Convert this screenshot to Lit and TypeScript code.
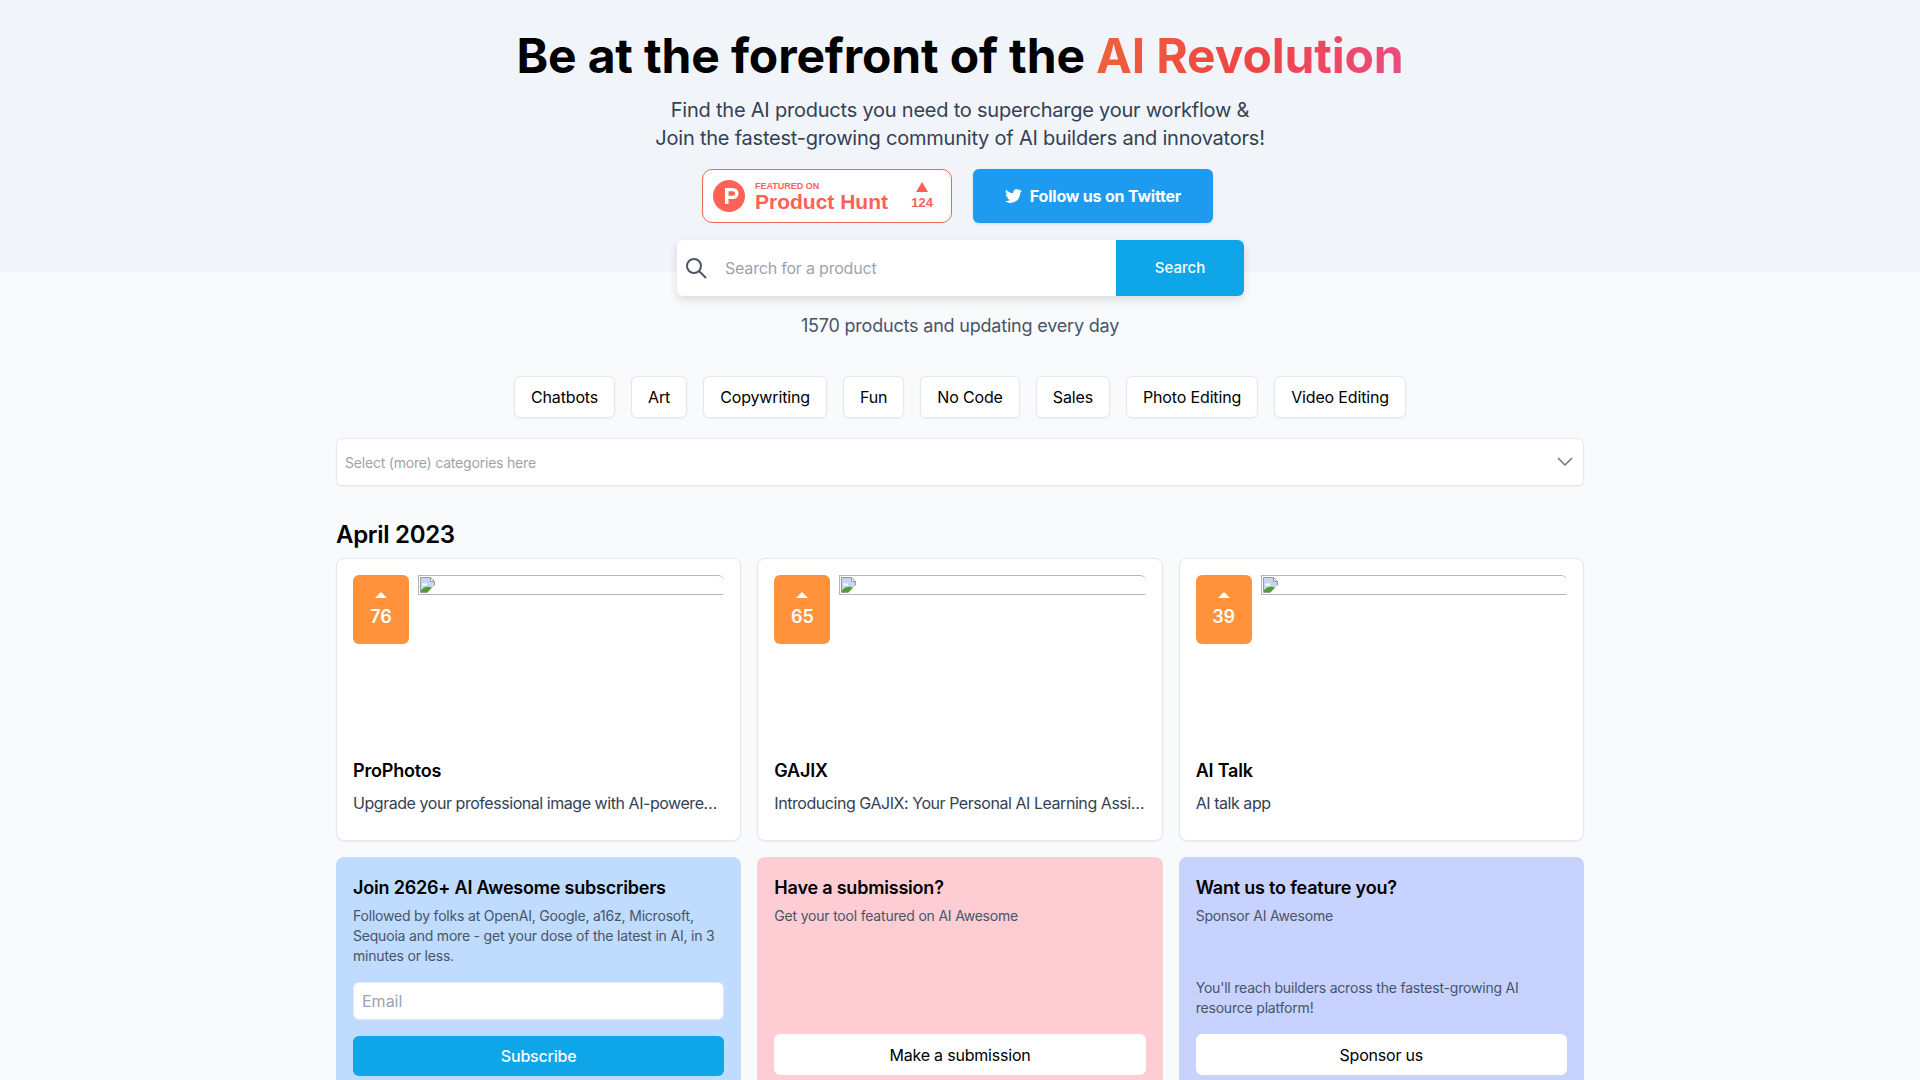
import { LitElement, html, css } from 'lit'
import { customElement } from 'lit/decorators.js'

const cats = ['Chatbots', 'Art', 'Copywriting', 'Fun', 'No Code', 'Sales', 'Photo Editing', 'Video Editing']
const products = [
  { votes: 76, name: 'ProPhotos', desc: 'Upgrade your professional image with AI-powered portraits' },
  { votes: 65, name: 'GAJIX', desc: 'Introducing GAJIX: Your Personal AI Learning Assistant' },
  { votes: 39, name: 'AI Talk', desc: 'AI talk app' }
]

@customElement('app-root')
export class AppRoot extends LitElement {
  static styles = css`
    :host {
      display: block;
      height: 1080px;
      overflow: hidden;
      background: #f8fafc;
      font-family: Inter, sans-serif;
      color: #000;
    }
    .hero-bg { height: 272px; background: #f1f5f9; margin-bottom: -272px; }
    .page { display: flex; flex-direction: column; align-items: center; }
    h1 { margin: 26px 0 0; font-size: 48px; line-height: 60px; font-weight: 700; letter-spacing: -0.15px; }
    .accent { background: linear-gradient(90deg, #f0603a, #ef4444 50%, #ec4b80); -webkit-background-clip: text; background-clip: text; color: transparent; }
    .sub { margin: 10px 0 0; font-size: 20px; line-height: 28px; color: #334155; text-align: center; letter-spacing: -0.22px; }
    .badges { display: flex; gap: 21px; margin: 17px 5px 0 0; }
    .ph { width: 250px; height: 54px; box-sizing: border-box; border: 1px solid #f0645a; border-radius: 10px; background: #fff; color: #ff6154; display: flex; align-items: center; padding: 0 18px 0 10px; gap: 10px; font-family: 'Liberation Sans', sans-serif; }
    .ph-text { flex: 1; padding-top: 1px; }
    .ph-small { font-size: 9px; font-weight: 700; line-height: 10px; }
    .ph-big { font-size: 21px; font-weight: 700; line-height: 22px; }
    .ph-votes { font-size: 13px; font-weight: 700; text-align: center; line-height: 16px; }
    .ph-votes svg { display: block; margin: 0 auto 3px; }
    .tw { width: 240px; height: 54px; border-radius: 6px; background: #1d9bf0; color: #fff; display: flex; align-items: center; justify-content: center; gap: 8px; font-size: 16px; font-weight: 700; letter-spacing: -0.2px; box-shadow: 0 1px 3px rgba(0,0,0,.12); }
    .search { display: flex; width: 567px; height: 56px; margin: 17px 0 0 1px; background: #fff; border-radius: 6px; box-shadow: 0 4px 10px rgba(0,0,0,.12); }
    .search-field { flex: 1; display: flex; align-items: center; gap: 17px; padding-left: 7px; color: #9ca3af; font-size: 16px; letter-spacing: -0.2px; }
    .search-btn { width: 128px; padding-bottom: 1px; box-sizing: border-box; background: #0ea5e9; color: #fff; border-radius: 0 6px 6px 0; display: flex; align-items: center; justify-content: center; font-size: 15px; font-weight: 500; }
    .count { margin-top: 18px; font-size: 18px; line-height: 24px; color: #475569; letter-spacing: -0.2px; }
    .chips { display: flex; gap: 16px; margin-top: 38px; }
    .chip { height: 42px; box-sizing: border-box; padding: 0 16px; display: flex; align-items: center; border: 1px solid #e2e8f0; border-radius: 6px; background: #fff; font-size: 16px; letter-spacing: -0.15px; box-shadow: 0 1px 2px rgba(0,0,0,.05); }
    .wrap { width: 1248px; }
    .select { height: 48px; box-sizing: border-box; margin-top: 20px; padding: 0 10px 0 8px; display: flex; align-items: center; justify-content: space-between; border: 1px solid #e2e8f0; border-radius: 6px; background: #fff; color: #9ca3af; font-size: 14px; letter-spacing: -0.2px; box-shadow: 0 1px 2px rgba(0,0,0,.05); }
    h2 { margin: 33px 0 0; font-size: 24px; line-height: 32px; font-weight: 600; letter-spacing: -0.3px; }
    .grid { display: grid; grid-template-columns: repeat(3, minmax(0, 1fr)); gap: 16px; margin-top: 7px; }
    .card { height: 283px; box-sizing: border-box; padding: 16px; background: #fff; border: 1px solid #e2e8f0; border-radius: 8px; display: flex; flex-direction: column; box-shadow: 0 1px 2px rgba(0,0,0,.05); }
    .top { display: flex; gap: 9px; height: 182px; flex: none; }
    .vote { width: 56px; height: 69px; flex: none; background: #ff923b; border-radius: 6px; color: #fff; display: flex; flex-direction: column; align-items: center; justify-content: center; gap: 8px; font-size: 18px; font-weight: 600; }
    .tri { width: 0; height: 0; border: 6px solid transparent; border-top: 0; border-bottom: 6px solid #fff; }
    .img { flex: 1; height: 20px; box-sizing: border-box; border: 1px solid #b5b5b5; border-right: 0; border-radius: 0 6px 2px 0; }
    .img svg { display: block; margin-top: 1px; }
    .name { font-size: 18px; line-height: 28px; font-weight: 600; letter-spacing: -0.2px; }
    .desc { margin-top: 5px; font-size: 16px; line-height: 26px; color: #334155; white-space: nowrap; overflow: hidden; text-overflow: ellipsis; letter-spacing: -0.45px; }
    .promo { height: 235px; box-sizing: border-box; padding: 17px 17px 16px; border-radius: 8px; display: flex; flex-direction: column; }
    .promo h3 { margin: 0; font-size: 18px; line-height: 28px; font-weight: 600; letter-spacing: -0.2px; }
    .promo p { margin: 4px 0 0; font-size: 14px; line-height: 20px; color: #475569; letter-spacing: -0.2px; }
    .blue { background: #bfdbfe; }
    .pink { background: #fecdd3; }
    .indigo { background: #c7d2fe; }
    .email { height: 38px; box-sizing: border-box; margin-top: 16px; padding: 0 8px; display: flex; align-items: center; background: #fff; border: 1px solid #e2e8f0; border-radius: 6px; color: #9ca3af; font-size: 16px; }
    .sub-btn { height: 40px; margin-top: 16px; background: #0ea5e9; color: #fff; border-radius: 6px; display: flex; align-items: center; justify-content: center; font-size: 16px; font-weight: 500; letter-spacing: -0.2px; }
    .white-btn { height: 41px; margin-top: auto; margin-bottom: 1px; flex: none; background: #fff; border-radius: 6px; display: flex; align-items: center; justify-content: center; font-size: 16px; letter-spacing: -0.2px; }
    .promo .late { margin-top: auto; }
    .late + .white-btn { margin-top: 16px; }
  `

  render() {
    return html`
      <div class="hero-bg"></div>
      <div class="page">
        <h1>Be at the forefront of the <span class="accent">AI Revolution</span></h1>
        <p class="sub">Find the AI products you need to supercharge your workflow &amp;<br />Join the fastest-growing community of AI builders and innovators!</p>
        <div class="badges">
          <div class="ph">
            <svg width="32" height="32" viewBox="0 0 32 32"><circle cx="16" cy="16" r="16" fill="#ff6154" /><path d="M12 8v16h3.500v-5h4.500a5.500 5.500 0 0 0 0-11zm3.500 3.300H20a2.200 2.200 0 0 1 0 4.400h-4.500z" fill="#fff" /></svg>
            <div class="ph-text"><div class="ph-small">FEATURED ON</div><div class="ph-big">Product Hunt</div></div>
            <div class="ph-votes"><svg width="12" height="10" viewBox="0 0 12 10"><path d="M6 0l6 10H0z" fill="#ff6154" /></svg><div>124</div></div>
          </div>
          <div class="tw">
            <svg width="17" height="14" viewBox="0 0 24 20"><path fill="#fff" d="M24 2.400a10 10 0 0 1-2.800.8A5 5 0 0 0 23.300.5a9.800 9.800 0 0 1-3.100 1.200 4.900 4.900 0 0 0-8.400 4.500A14 14 0 0 1 1.700 1a4.900 4.900 0 0 0 1.500 6.600 4.900 4.900 0 0 1-2.200-.6v.1a4.900 4.900 0 0 0 3.900 4.800 5 5 0 0 1-2.200.1 4.900 4.900 0 0 0 4.600 3.400A9.900 9.900 0 0 1 0 17.400 14 14 0 0 0 7.500 20c9.100 0 14-7.500 14-14v-.6A10 10 0 0 0 24 2.400z" /></svg>
            Follow us on Twitter
          </div>
        </div>
        <div class="search">
          <div class="search-field">
            <svg width="24" height="24" viewBox="0 0 24 24" fill="none" stroke="#4b5563" stroke-width="2"><circle cx="10" cy="10" r="7" /><path d="M15 15l7 7" /></svg>
            Search for a product
          </div>
          <div class="search-btn">Search</div>
        </div>
        <div class="count">1570 products and updating every day</div>
        <div class="chips">${cats.map(c => html`<div class="chip">${c}</div>`)}</div>
        <div class="wrap">
          <div class="select">
            Select (more) categories here
            <svg width="16" height="10" viewBox="0 0 16 10" fill="none" stroke="#6b7280" stroke-width="1.500"><path d="M1 1l7 7 7-7" /></svg>
          </div>
          <h2>April 2023</h2>
          <div class="grid">
            ${products.map(p => html`
              <div class="card">
                <div class="top">
                  <div class="vote"><div class="tri"></div>${p.votes}</div>
                  <div class="img">
                    <svg width="17" height="16" viewBox="0 0 17 16">
                      <path d="M1.500.5h10l4 4v11h-14z" fill="#c5d6f0" stroke="#9a9a9a" />
                      <path d="M11.500.5v4h4z" fill="#fff" stroke="#9a9a9a" />
                      <path d="M3 6.500h5v2H3z" fill="#fff" />
                      <path d="M2 15v-2c3-3 6-4 9-3l2 1-4 4z" fill="#4f9e2f" />
                      <path d="M16 8L8 16h8z" fill="#fff" />
                    </svg>
                  </div>
                </div>
                <div class="name">${p.name}</div>
                <div class="desc">${p.desc}</div>
              </div>
            `)}
            <div class="promo blue">
              <h3>Join 2626+ AI Awesome subscribers</h3>
              <p>Followed by folks at OpenAI, Google, a16z, Microsoft, Sequoia and more - get your dose of the latest in AI, in 3 minutes or less.</p>
              <div class="email">Email</div>
              <div class="sub-btn">Subscribe</div>
            </div>
            <div class="promo pink">
              <h3>Have a submission?</h3>
              <p>Get your tool featured on AI Awesome</p>
              <div class="white-btn">Make a submission</div>
            </div>
            <div class="promo indigo">
              <h3>Want us to feature you?</h3>
              <p>Sponsor AI Awesome</p>
              <p class="late">You'll reach builders across the fastest-growing AI resource platform!</p>
              <div class="white-btn">Sponsor us</div>
            </div>
          </div>
        </div>
      </div>
    `
  }
}
